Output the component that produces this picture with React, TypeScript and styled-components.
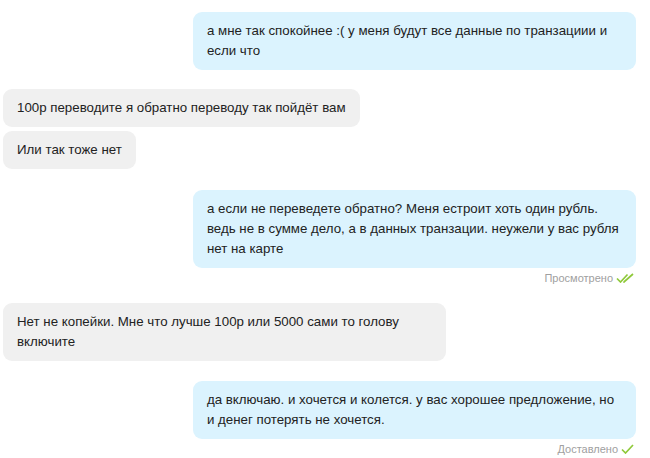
import React from "react";
import styled, { createGlobalStyle } from "styled-components";

const Global = createGlobalStyle`
  html, body { margin: 0; padding: 0; background: #ffffff; }
  body { font-family: Arial, "Liberation Sans", sans-serif; }
`;

const Chat = styled.div`
  width: 650px;
  box-sizing: border-box;
  padding: 12px 14px 0 3px;
  display: flex;
  flex-direction: column;
`;

const Group = styled.div<{ $out?: boolean; $gap: number }>`
  display: flex;
  flex-direction: column;
  align-items: ${(p) => (p.$out ? "flex-end" : "flex-start")};
  gap: 4px;
  margin-bottom: ${(p) => p.$gap}px;
`;

const Bubble = styled.div<{ $out?: boolean }>`
  max-width: 70%;
  box-sizing: border-box;
  padding: 9px 14px;
  border-radius: 9px;
  background: ${(p) => (p.$out ? "#dbf3fe" : "#f0f0f0")};
  color: #222222;
  font-size: 13.3px;
  line-height: 20px;
`;

const Status = styled.div`
  display: flex;
  align-items: center;
  gap: 3px;
  margin-top: -1px;
  padding-right: 2px;
  font-size: 11px;
  color: #a0a0a0;
  line-height: 14px;
`;

const Check = ({ double }: { double?: boolean }) => (
  <svg width={double ? 18 : 13} height="10" viewBox={double ? "0 0 18 10" : "0 0 13 10"} fill="none">
    {double ? (
      <>
        <path d="M1 5.5 L4.5 9 L11.5 1.5" stroke="#8fc93a" strokeWidth="1.7" />
        <path d="M7.5 8.5 L8 9 L17 1" stroke="#8fc93a" strokeWidth="1.7" />
      </>
    ) : (
      <path d="M1 5.5 L4.5 9 L12 1" stroke="#8fc93a" strokeWidth="1.7" />
    )}
  </svg>
);

export default function App() {
  return (
    <>
      <Global />
      <Chat>
        <Group $out $gap={19}>
          <Bubble $out>
            а мне так спокойнее :( у меня будут все данные по транзациии и если что
          </Bubble>
        </Group>
        <Group $gap={21}>
          <Bubble>100р переводите я обратно переводу так пойдёт вам</Bubble>
          <Bubble>Или так тоже нет</Bubble>
        </Group>
        <Group $out $gap={18}>
          <Bubble $out>
            а если не переведете обратно? Меня естроит хоть один рубль. ведь не в сумме дело, а в данных транзации. неужели у вас рубля нет на карте
          </Bubble>
          <Status>
            Просмотрено <Check double />
          </Status>
        </Group>
        <Group $gap={20}>
          <Bubble>
            Нет не копейки. Мне что лучше 100р или 5000 сами то голову включите
          </Bubble>
        </Group>
        <Group $out $gap={0}>
          <Bubble $out>
            да включаю. и хочется и колется. у вас хорошее предложение, но и денег потерять не хочется.
          </Bubble>
          <Status>
            Доставлено <Check />
          </Status>
        </Group>
      </Chat>
    </>
  );
}
